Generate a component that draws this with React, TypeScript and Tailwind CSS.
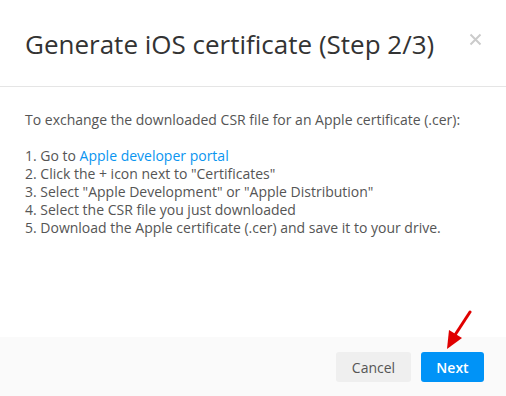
export default function App() {
  return (
    <div className="w-[506px] h-[396px] bg-white flex flex-col" style={{ fontFamily: '"Open Sans", sans-serif' }}>
      <div className="h-[87px] flex items-center justify-between pl-[25px] pr-[24px] border-b border-[#e5e5e5] shrink-0">
        <h1 className="text-[26px] text-[#333] leading-none pt-[1px]">Generate iOS certificate (Step 2/3)</h1>
        <svg width="13" height="13" viewBox="0 0 13 13" className="-mt-[7px]">
          <path d="M1.5 1.5 L11.5 11.5 M11.5 1.5 L1.5 11.5" stroke="#cbcbcb" strokeWidth="2" />
        </svg>
      </div>
      <div className="flex-1 px-[25px] pt-[24px] text-[14px] leading-[18px] text-[#555]">
        <p>To exchange the downloaded CSR file for an Apple certificate (.cer):</p>
        <p className="mt-[18px]">
          1. Go to <a className="text-[#0a95f0]">Apple developer portal</a>
        </p>
        <p>2. Click the + icon next to "Certificates"</p>
        <p>3. Select "Apple Development" or "Apple Distribution"</p>
        <p>4. Select the CSR file you just downloaded</p>
        <p>5. Download the Apple certificate (.cer) and save it to your drive.</p>
      </div>
      <div className="relative h-[59px] bg-[#fafafa] flex items-start justify-end gap-[10px] pt-[15px] pr-[22px] shrink-0">
        <button className="h-[30px] w-[75px] rounded-[3px] bg-[#efefef] text-[#555] text-[14px]">Cancel</button>
        <button className="h-[30px] w-[63px] rounded-[3px] bg-[#0093f7] text-white text-[14px] font-semibold">Next</button>
        <svg className="absolute left-[440px] top-[-27px]" width="36" height="42" viewBox="0 0 36 42">
          <path d="M30 2 L15 25" stroke="#e00000" strokeWidth="3" strokeLinecap="round" fill="none" />
          <path d="M7 39 L9 20 L22 28 Z" fill="#e00000" />
        </svg>
      </div>
    </div>
  );
}
